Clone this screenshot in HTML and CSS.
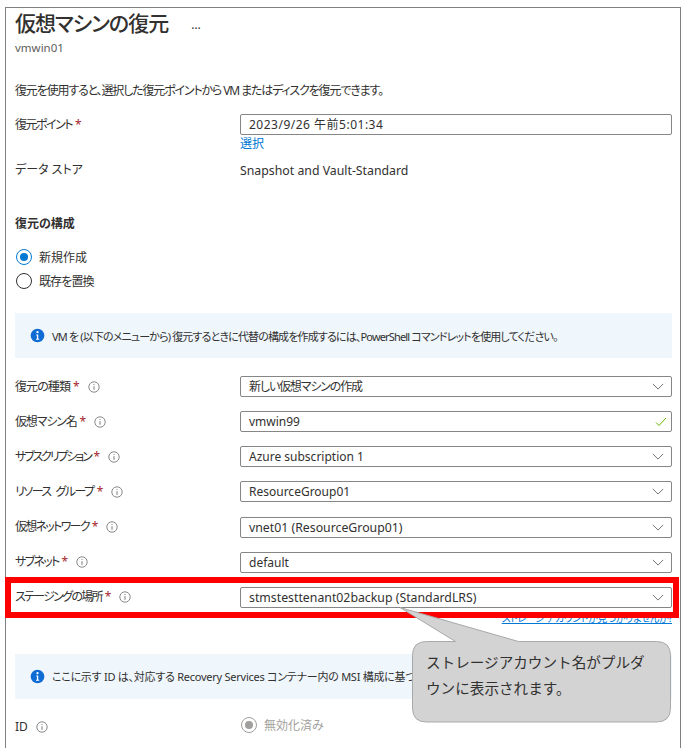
FILE: index.html
```
<!DOCTYPE html>
<html lang="ja">
<head>
<meta charset="utf-8">
<title>仮想マシンの復元</title>
<link rel="stylesheet" href="styles.css">
</head>
<body>
<svg class="defs" width="0" height="0" aria-hidden="true">
  <defs>
    <symbol id="chev" viewBox="0 0 14 8"><path d="M1 1l6 6 6-6" fill="none" stroke="#605e5c" stroke-width="1"/></symbol>
    <symbol id="tip" viewBox="0 0 12 12"><circle cx="6" cy="6" r="5.2" fill="none" stroke="#7a7a7a" stroke-width=".9"/><path d="M6 5.2v3.6" stroke="#7a7a7a" stroke-width="1"/><circle cx="6" cy="3.5" r=".6" fill="#7a7a7a"/></symbol>
    <symbol id="info" viewBox="0 0 16 16"><circle cx="8" cy="8" r="7.3" fill="#0f6cd5"/><path d="M6.6 6.8h2.2v4.6h1v1.1H6.4v-1.1h1V7.9h-.8z" fill="#fff"/><circle cx="8" cy="4.4" r="1.2" fill="#fff"/></symbol>
  </defs>
</svg>
<main class="frame">
  <header class="head">
    <div class="title-line"><h1 class="title">仮想マシンの復元</h1><span class="more">…</span></div>
    <div class="sub">vmwin01</div>
  </header>
  <p class="intro">復元を使用すると、選択した復元ポイントから VM またはディスクを復元できます。</p>

  <div class="row first">
    <div class="label"><span class="t1">復元ポイント</span><b class="req">*</b></div>
    <div class="control"><div class="box date">2023/9/26 午前5:01:34</div><a class="pick">選択</a></div>
  </div>
  <div class="row store">
    <div class="label">データ ストア</div>
    <div class="control wide">Snapshot and Vault-Standard</div>
  </div>

  <h2 class="section">復元の構成</h2>
  <div class="radios">
    <div class="radio-line"><span class="radio on"></span>新規作成</div>
    <div class="radio-line"><span class="radio"></span><span class="t0">既存を置換</span></div>
  </div>

  <div class="banner"><svg class="info"><use href="#info"/></svg><span class="long">VM を (以下のメニューから) 復元するときに代替の構成を作成するには、PowerShell コマンドレットを使用してください。</span></div>

  <div class="fields">
    <div class="row"><div class="label"><span class="t0">復元の種類</span><b class="req">*</b><svg class="tip"><use href="#tip"/></svg></div><div class="control"><div class="box sel"><span class="t3">新しい仮想マシンの作成</span><svg class="chev"><use href="#chev"/></svg></div></div></div>
    <div class="row"><div class="label"><span class="t3">仮想マシン名</span><b class="req">*</b><svg class="tip"><use href="#tip"/></svg></div><div class="control"><div class="box sel">vmwin99<svg class="check" viewBox="0 0 12 10"><path d="M1 5.5l3 3 7-7.5" fill="none" stroke="#6bb700" stroke-width="1"/></svg></div></div></div>
    <div class="row"><div class="label"><span class="t4">サブスクリプション</span><b class="req">*</b><svg class="tip"><use href="#tip"/></svg></div><div class="control"><div class="box sel">Azure subscription 1<svg class="chev"><use href="#chev"/></svg></div></div></div>
    <div class="row"><div class="label"><span class="t1">リソース グループ</span><b class="req">*</b><svg class="tip"><use href="#tip"/></svg></div><div class="control"><div class="box sel">ResourceGroup01<svg class="chev"><use href="#chev"/></svg></div></div></div>
    <div class="row"><div class="label"><span class="t2">仮想ネットワーク</span><b class="req">*</b><svg class="tip"><use href="#tip"/></svg></div><div class="control"><div class="box sel wide">vnet01 (ResourceGroup01)<svg class="chev"><use href="#chev"/></svg></div></div></div>
    <div class="row"><div class="label"><span class="t2">サブネット</span><b class="req">*</b><svg class="tip"><use href="#tip"/></svg></div><div class="control"><div class="box sel">default<svg class="chev"><use href="#chev"/></svg></div></div></div>
    <div class="row"><div class="label"><span class="t2">ステージングの場所</span><b class="req">*</b><svg class="tip"><use href="#tip"/></svg></div><div class="control"><div class="box sel wide">stmstesttenant02backup (StandardLRS)<svg class="chev"><use href="#chev"/></svg></div></div></div>
  </div>
  <a class="missing">ストレージ アカウントが見つかりませんか?</a>

  <div class="banner second"><svg class="info"><use href="#info"/></svg><span class="under">ここに示す ID は、対応する Recovery Services コンテナー内の MSI 構成に基づいています。</span></div>

  <div class="row id-row">
    <div class="label">ID<svg class="tip"><use href="#tip"/></svg></div>
    <div class="control disabled"><span class="radio off"></span>無効化済み</div>
  </div>

  <div class="redbox"></div>
  <div class="callout">
    <svg class="callout-shape" viewBox="0 0 272 120" width="272" height="120" aria-hidden="true">
      <path d="M12.5 50.5Q12.5 36.5 26.5 36.5H55.5L0 2.5 118.5 36.5H256.5Q270.5 36.5 270.5 50.5V103Q270.5 117 256.5 117H26.5Q12.5 117 12.5 103Z" fill="#d3d3d3" stroke="#a9a9a9" stroke-width="1"/>
    </svg>
    <p class="callout-text">ストレージアカウント名がプルダウンに表示されます。</p>
  </div>
</main>
</body>
</html>
```
FILE: styles.css
```
* { box-sizing: border-box; }
html, body { margin: 0; height: 748px; overflow: hidden; background: #fff; }
body {
  font-family: "Noto Sans", "Noto Sans CJK JP", sans-serif;
  font-size: 12px;
  color: #323130;
  font-feature-settings: "palt";
}
.defs { position: absolute; }
.frame {
  position: relative;
  margin: 7px 3px 0 5px;
  height: 741px;
  border: 1px solid #808080;
  border-bottom: 0;
  padding: 0 8px 0 9px;
}
.title-line { display: flex; align-items: center; height: 33px; }
.title { margin: -2px 0 0; font-size: 21px; font-weight: 500; line-height: 33px; letter-spacing: -1px; }
.more { margin-left: 23px; font-size: 12px; line-height: 20px; color: #323130; }
.sub { font-size: 11.5px; line-height: 16px; color: #605e5c; margin-top: -1px; }
.intro { margin: 26px 0 0; line-height: 18px; height: 18px; letter-spacing: -1.15px; white-space: nowrap; }
.row { display: grid; grid-template-columns: 225px 1fr; align-items: center; height: 21px; }
.first { margin-top: 14px; align-items: start; height: 38px; }
.first .label { line-height: 21px; }
.store { margin-top: 9px; height: 18px; }
.label { display: flex; align-items: center; white-space: pre; line-height: 18px; }
.t0 { letter-spacing: -.9px; }
.t1 { letter-spacing: -1.5px; word-spacing: 3px; }
.t2 { letter-spacing: -1.7px; }
.t3 { letter-spacing: -1.15px; }
.t4 { letter-spacing: -2.15px; }
.req { color: #a4262c; font-weight: 400; margin-left: 3px; }
.tip { width: 12px; height: 12px; margin-left: 8px; flex: none; }
.box {
  position: relative;
  height: 21px;
  line-height: 19px;
  padding-left: 8px;
  border: 1px solid #868686;
  border-radius: 2px;
}
.date { letter-spacing: .5px; }
.wide { font-size: 12.3px; }
.pick { display: block; color: #0078d4; line-height: 16px; margin-top: 1px; }
.section { margin: 36px 0 0; font-size: 12px; font-weight: 600; line-height: 18px; height: 18px; }
.radios { margin-top: 16px; display: flex; flex-direction: column; gap: 8px; }
.radio-line { display: flex; align-items: center; height: 16px; }
.radio {
  width: 16px; height: 16px; margin: 0 7px 0 1px;
  border: 1px solid #323130; border-radius: 50%; flex: none; background: #fff;
  display: inline-flex; align-items: center; justify-content: center;
}
.radio.on { border-color: #0078d4; }
.radio.on::after { content: ""; width: 8px; height: 8px; border-radius: 50%; background: #0078d4; }
.radio.off { border-color: #a19f9d; margin: 0 7px 0 0; }
.radio.off::after { content: ""; width: 8px; height: 8px; border-radius: 50%; background: #a19f9d; }
.banner {
  margin-top: 24px;
  height: 45px;
  display: flex;
  align-items: center;
  padding-left: 15px;
  background: #eff6fc;
  font-size: 11px;
  white-space: nowrap;
  overflow: hidden;
}
.long { letter-spacing: -.85px; }
.under { letter-spacing: -.25px; }
.info { width: 15px; height: 15px; margin-right: 7px; flex: none; }
.fields { margin-top: 18px; display: flex; flex-direction: column; gap: 14.17px; }
.chev { position: absolute; right: 7px; top: 6px; width: 12px; height: 7px; }
.check { position: absolute; right: 4px; top: 5px; width: 12px; height: 10px; }
.missing {
  display: block;
  margin-top: 4px;
  height: 13px;
  line-height: 13px;
  font-size: 10px;
  letter-spacing: -.5px;
  text-align: right;
  color: #0078d4;
  text-decoration: underline;
  white-space: nowrap;
}
.banner.second { margin-top: 29px; }
.id-row { margin-top: 19px; height: 18px; }
.disabled { display: flex; align-items: center; color: #a19f9d; padding-left: 1px; margin-top: -4px; }
.redbox {
  position: absolute;
  left: -1px; right: 1px;
  top: 569px; height: 41px;
  border: 6px solid #f00;
  pointer-events: none;
}
.callout { position: absolute; left: 394px; top: 597px; width: 272px; height: 120px; }
.callout-shape { position: absolute; left: 0; top: 0; overflow: visible; }
.callout-text {
  position: absolute;
  left: 26px; top: 44px; width: 228px;
  margin: 0;
  font-size: 14.6px;
  line-height: 26px;
  font-feature-settings: normal;
}
```
